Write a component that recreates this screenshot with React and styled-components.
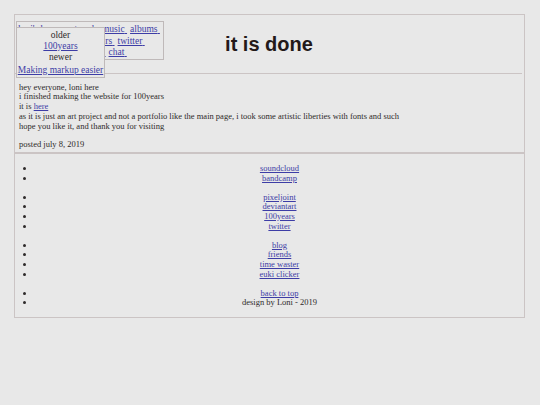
import React from "react";
import styled, { createGlobalStyle } from "styled-components";

const GlobalStyle = createGlobalStyle`
  html, body {
    margin: 0;
    padding: 0;
    background: #e8e8e8;
  }
  body {
    font-family: "Liberation Serif", "Times New Roman", serif;
    font-size: 8.5px;
    line-height: 9.75px;
    color: #2e2a2a;
  }
  a {
    color: #3d3da6;
    text-decoration: underline;
  }
`;

// the first words of each row sit under the dropdown
const navRows = [
  ["loni's home", "artwork", "music", "albums"],
  ["pixels", "friends", "100years", "twitter"],
  ["blog", "guestbook", "links", "chat"],
];

const footerLists = [
  ["soundcloud", "bandcamp"],
  ["pixeljoint", "deviantart", "100years", "twitter"],
  ["blog", "friends", "time waster", "euki clicker"],
];

const App = () => {
  return (
    <Page>
      <GlobalStyle />
      <Box>
        <Header>
          <Nav>
            {navRows.map((row, i) => (
              <NavRow key={i}>
                {row.map(item => (
                  <a key={item} href="#">
                    {item}&nbsp;
                  </a>
                ))}
              </NavRow>
            ))}
            <Dropdown>
              <span>older</span>
              <a href="#">100years</a>
              <span>newer</span>
              <a className="last" href="#">
                Making markup easier
              </a>
            </Dropdown>
          </Nav>
          <Title>it is done</Title>
        </Header>
        <Post>
          <p>
            hey everyone, loni here
            <br />
            i finished making the website for 100years
            <br />
            it is <a href="#">here</a>
            <br />
            as it is just an art project and not a portfolio like the main
            page, i took some artistic liberties with fonts and such
            <br />
            hope you like it, and thank you for visiting
          </p>
          <p>posted july 8, 2019</p>
        </Post>
      </Box>
      <Box>
        {footerLists.map((list, i) => (
          <LinkList key={i}>
            {list.map(item => (
              <li key={item}>
                <a href="#">{item}</a>
              </li>
            ))}
          </LinkList>
        ))}
        <LinkList>
          <li>
            <a href="#">back to top</a>
          </li>
          <li>design by Loni - 2019</li>
        </LinkList>
      </Box>
    </Page>
  );
};

export default App;

const Page = styled.div`
  margin: 14px 15px 0 14px;
`;

const Box = styled.div`
  border: 1px solid #cbc4c4;
`;

const Header = styled.div`
  display: grid;
  grid-template-columns: 1fr auto 1fr;
  align-items: start;
  margin-right: 2px;
  padding: 6px 0 13px 1px;
  border-bottom: 1px solid #cbc4c4;
`;

const Nav = styled.div`
  position: relative;
  justify-self: start;
  width: 144px;
  padding: 2px 1px 0 1px;
  border: 1px solid #bfb9b9;
  font-size: 9.5px;
  line-height: 11.5px;
`;

const NavRow = styled.div`
  white-space: nowrap;
  a {
    margin-right: 3px;
  }
`;

const Dropdown = styled.div`
  position: absolute;
  left: -1px;
  top: 5px;
  width: 87px;
  padding: 2px 0 1px;
  display: flex;
  flex-direction: column;
  align-items: center;
  background: #e8e8e8;
  border: 1px solid #bfb9b9;
  line-height: 11px;
  .last {
    margin-top: 2px;
  }
`;

const Title = styled.h1`
  margin: 12px 0 0;
  font-family: "Liberation Sans", Arial, sans-serif;
  font-size: 20px;
  line-height: 23px;
  font-weight: bold;
  color: #231919;
`;

const Post = styled.div`
  padding: 9px 4px 2px;
  p {
    margin: 0 0 9px;
  }
  p:last-child {
    margin-bottom: 0;
  }
`;

const LinkList = styled.ul`
  margin: 9px 0;
  padding-left: 20px;
  text-align: center;
  &:first-child {
    margin-top: 10px;
  }
`;
